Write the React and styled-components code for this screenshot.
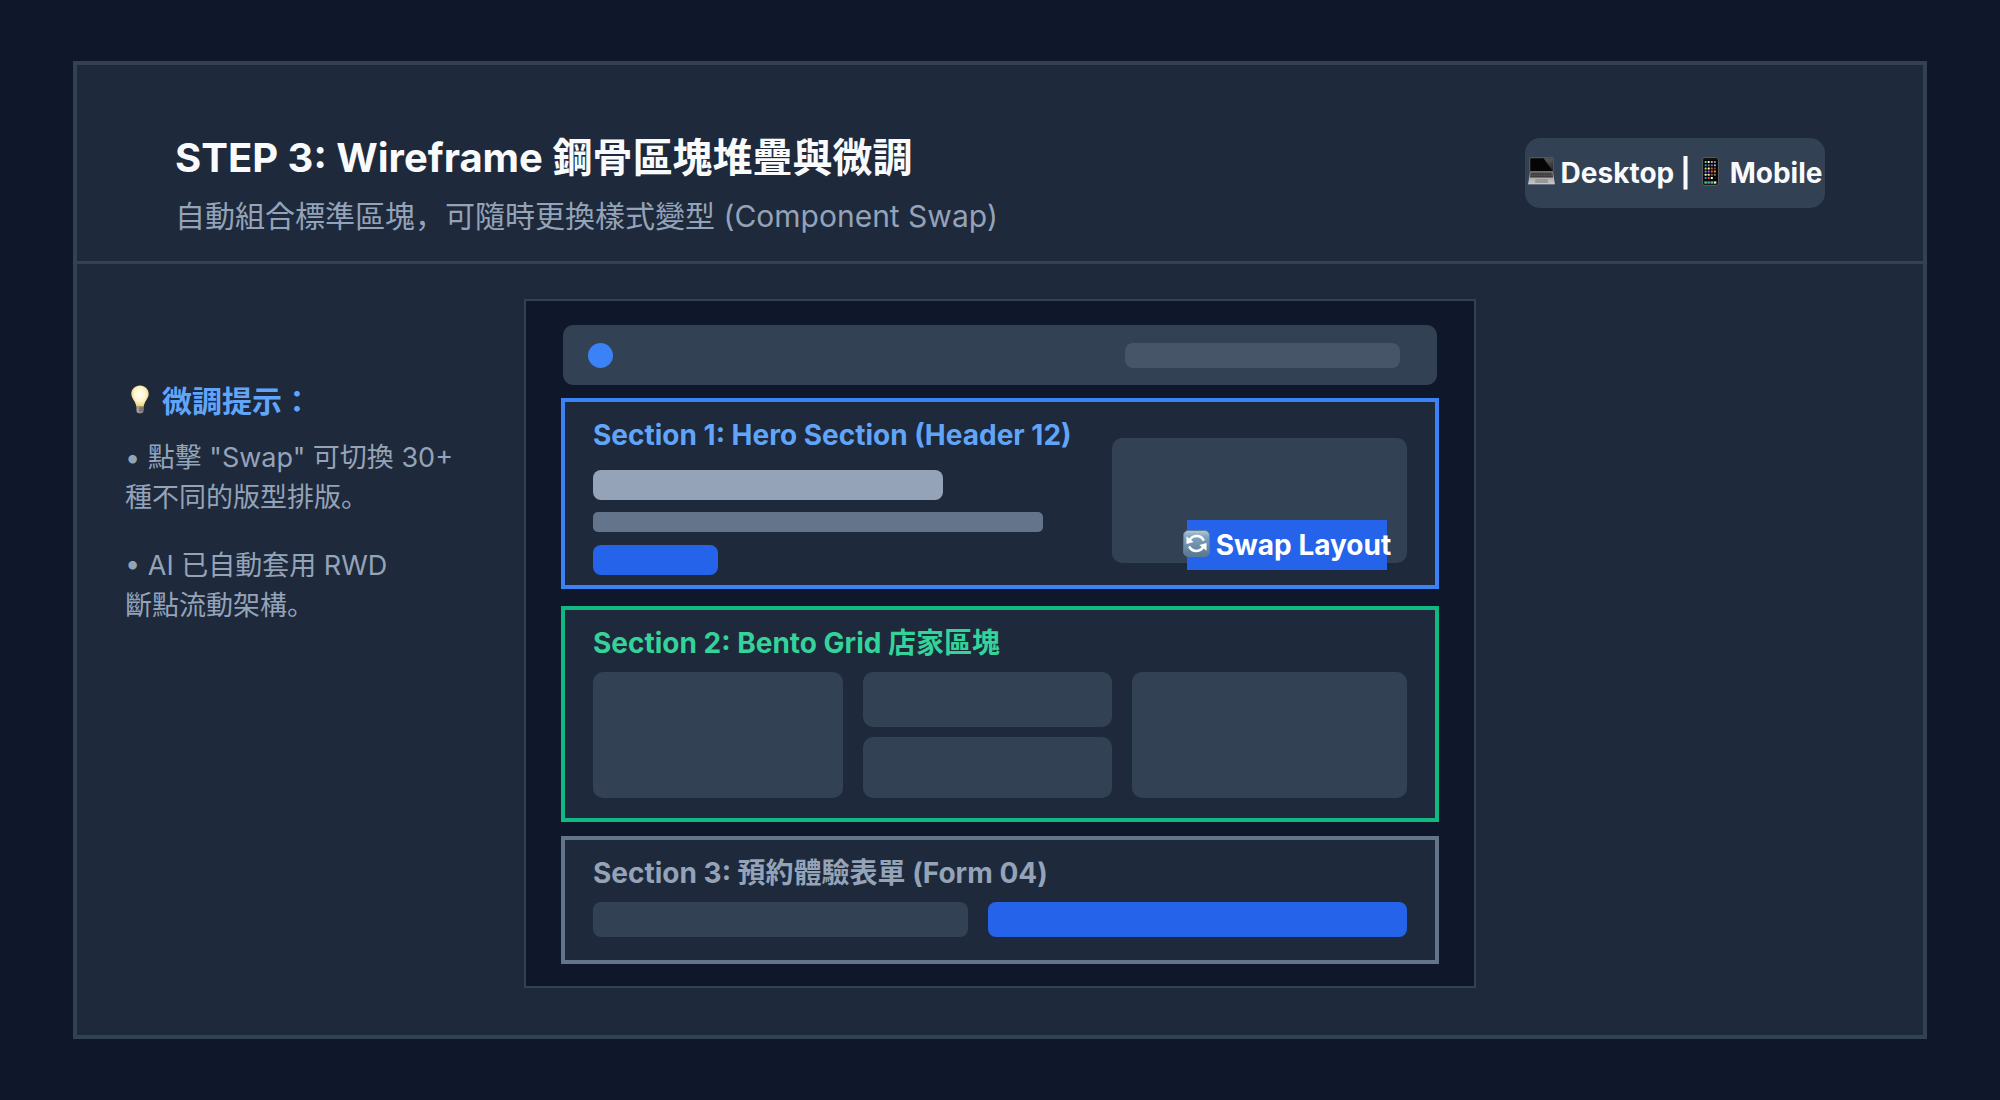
import React, { useState } from 'react';
import styled, { createGlobalStyle } from 'styled-components';

const GlobalStyle = createGlobalStyle`
  *, *::before, *::after {
    box-sizing: border-box;
  }
  body {
    margin: 0;
    background: #0f172a;
    font-family: Inter, "Noto Sans CJK JP", sans-serif;
  }
  h1, h2, h3, p {
    margin: 0;
  }
  button {
    font: inherit;
    color: inherit;
    border: none;
    background: none;
    padding: 0;
    cursor: pointer;
  }
`;

const LaptopIcon = () => (
  <Icon viewBox="0 0 27 32" $w={27} aria-hidden="true">
    <defs>
      <linearGradient id="lidShine" x1="0" y1="0" x2="0" y2="1">
        <stop offset="0" stopColor="#5a5a5a" />
        <stop offset="1" stopColor="#222" />
      </linearGradient>
      <linearGradient id="deck" x1="0" y1="0" x2="0" y2="1">
        <stop offset="0" stopColor="#8f8f8f" />
        <stop offset="1" stopColor="#c6c6c6" />
      </linearGradient>
    </defs>
    <path d="M1.6 .6h23.8v14H1.6z" fill="#777" />
    <path d="M2.2 1.2h22.6v13H2.2z" fill="#050505" />
    <path d="M15.500 1.200h9.300v13z" fill="url(#lidShine)" />
    <path d="M2 14.4h23l1.8 12.4H.2z" fill="url(#deck)" />
    <path d="M2.6 15.4h21.8l.6 5H2z" fill="#333" />
    <path d="M2.6 17h21.8M2.3 18.8h22.4" stroke="#8a8a8a" strokeWidth=".6" strokeDasharray="1.2 .5" />
    <path d="M7.4 22h12.2l.6 4H6.8z" fill="#989898" />
    <path d="M.2 26.4h26.6v.9H.2z" fill="#ddd" />
  </Icon>
);

const appColors = [
  '#4cd964', '#f2f2f2', '#c994d8', '#8a8a8a',
  '#1d9bf6', '#777777', '#a5684a', '#5ac8fa',
  '#ffcc33', '#ffffff', '#e8503a', '#555555',
  '#34aadc', '#c643fc', '#ff5e3a', '#ff9500',
  '#e8e8e8', '#ffe08a', '#666666', '#777777',
  '#2f8df5', '#ff3b30', '#ffffff', '#111111',
];
const dockColors = ['#4cd964', '#34aadc', '#4cd964', '#f2f2f2'];

const PhoneIcon = () => (
  <Icon viewBox="-5 0 27 32" $w={27} aria-hidden="true">
    <rect x=".5" y=".5" width="16" height="28" rx="2.4" fill="#111" stroke="#56585c" />
    <rect x="1.8" y="3" width="13.4" height="23.6" fill="#020202" />
    {appColors.map((c, i) => (
      <rect key={i} x={2.6 + (i % 4) * 3.1} y={4 + Math.floor(i / 4) * 3.2} width="2" height="2" rx=".5" fill={c} />
    ))}
    <rect x="1.8" y="23.8" width="13.4" height="3.4" fill="#333" />
    {dockColors.map((c, i) => (
      <rect key={i} x={2.6 + i * 3.1} y="24.4" width="2.2" height="2.2" rx=".5" fill={c} />
    ))}
  </Icon>
);

const BulbIcon = () => (
  <Icon viewBox="0 0 18 33" $w={18} aria-hidden="true">
    <defs>
      <radialGradient id="glow" cx=".5" cy=".42" r=".55">
        <stop offset="0" stopColor="#fffef6" />
        <stop offset=".55" stopColor="#fff6cf" />
        <stop offset="1" stopColor="#f1d27c" />
      </radialGradient>
    </defs>
    <path d="M9 .4C4 .4.3 4.1.3 8.8c0 3.4 2 5.5 3.4 8 .9 1.7 1.3 3.3 1.7 5h7.2c.4-1.7.8-3.3 1.7-5 1.4-2.5 3.4-4.6 3.4-8C17.7 4.1 14 .4 9 .4z" fill="url(#glow)" />
    <path d="M5.3 21.6h7.4v4.2c0 1.6-1.6 2.8-3.7 2.8s-3.7-1.2-3.7-2.8z" fill="#8d8a84" />
    <path d="M5.3 23.2h7.4M5.3 25.4h7.4" stroke="#5c5a55" strokeWidth=".8" />
    <path d="M7 22v5.4" stroke="#c9c6bf" strokeWidth="1" />
  </Icon>
);

const SwapIcon = () => (
  <Icon viewBox="0 0 28 32" $w={27} aria-hidden="true">
    <defs>
      <linearGradient id="tile" x1="0" y1="0" x2="0" y2="1">
        <stop offset="0" stopColor="#b4cadb" />
        <stop offset=".25" stopColor="#7fa2bf" />
        <stop offset="1" stopColor="#587790" />
      </linearGradient>
    </defs>
    <rect x=".5" y=".5" width="27" height="27" rx="5" fill="url(#tile)" stroke="#5f7f98" />
    <path d="M6.6 11.4A8.2 8.2 0 0 1 21.6 11M21.4 16.6A8.2 8.2 0 0 1 6.4 17" fill="none" stroke="#fff" strokeWidth="2.6" />
    <path d="M3.6 6.600v7.800l7.400-2zM24.400 21.400v-7.800l-7.400 2z" fill="#fff" />
  </Icon>
);

const App = () => {
  const [device, setDevice] = useState('desktop');

  return (
    <>
      <GlobalStyle />
      <Page>
        <Panel>
          <Header>
            <div>
              <Title>STEP 3: Wireframe 鋼骨區塊堆疊與微調</Title>
              <SubTitle>自動組合標準區塊，可隨時更換樣式變型 (Component Swap)</SubTitle>
            </div>
            <DeviceToggle role="group" aria-label="Desktop | Mobile">
              <DeviceButton
                type="button"
                aria-pressed={device === 'desktop'}
                onClick={() => setDevice('desktop')}
              >
                <LaptopIcon />
                Desktop
              </DeviceButton>
              <span>|</span>
              <DeviceButton
                type="button"
                aria-pressed={device === 'mobile'}
                onClick={() => setDevice('mobile')}
              >
                <PhoneIcon />
                Mobile
              </DeviceButton>
            </DeviceToggle>
          </Header>

          <Body>
            {/* 左側提示 */}
            <Tips>
              <TipsTitle>
                <BulbIcon />
                微調提示：
              </TipsTitle>
              <Tip>
                • 點擊 "Swap" 可切換 30+
                <br />
                種不同的版型排版。
              </Tip>
              <Tip>
                • AI 已自動套用 RWD
                <br />
                斷點流動架構。
              </Tip>
            </Tips>

            {/* 線框畫布 */}
            <Canvas>
              <NavBar>
                <NavLogo />
                <NavLinks />
              </NavBar>

              <Section $border="#3b82f6">
                <HeroRow>
                  <HeroText>
                    <SectionTitle $color="#60a5fa">Section 1: Hero Section (Header 12)</SectionTitle>
                    <HeroHeading />
                    <HeroLine />
                    <HeroCta />
                  </HeroText>
                  <HeroImage>
                    <SwapButton type="button">
                      <SwapIcon />
                      Swap Layout
                    </SwapButton>
                  </HeroImage>
                </HeroRow>
              </Section>

              <Section $border="#10b981">
                <SectionTitle $color="#34d399">Section 2: Bento Grid 店家區塊</SectionTitle>
                <BentoGrid>
                  <Block />
                  <BentoStack>
                    <Block />
                    <Block />
                  </BentoStack>
                  <Block />
                </BentoGrid>
              </Section>

              <Section $border="#64748b">
                <SectionTitle $color="#94a3b8">Section 3: 預約體驗表單 (Form 04)</SectionTitle>
                <FormRow>
                  <FormBar $color="#334155" />
                  <FormBar $color="#2563eb" />
                </FormRow>
              </Section>
            </Canvas>
          </Body>
        </Panel>
      </Page>
    </>
  );
};

const Icon = styled.svg`
  display: block;
  flex: none;
  width: ${({ $w }) => $w}px;
`;

const Page = styled.div`
  display: flex;
  min-height: 100vh;
  padding: 61px 73px;
`;

const Panel = styled.main`
  flex: 1;
  min-width: 0;
  background: #1e293b;
  border: 4px solid #334155;
`;

const Header = styled.header`
  display: flex;
  justify-content: space-between;
  align-items: flex-start;
  padding: 69px 98px 27px;
  border-bottom: 3px solid #334155;
`;

const Title = styled.h1`
  font-size: 40px;
  line-height: 48px;
  font-weight: 700;
  color: #f8fafc;
`;

const SubTitle = styled.p`
  margin-top: 16px;
  font-size: 30px;
  line-height: 36px;
  color: #94a3b8;
`;

const DeviceToggle = styled.div`
  display: flex;
  flex: none;
  align-items: center;
  justify-content: center;
  gap: 6px;
  width: 300px;
  height: 70px;
  margin-top: 4px;
  border-radius: 15px;
  background: #334155;
  color: #f8fafc;
  font-size: 28px;
  line-height: 34px;
  font-weight: 700;
  white-space: nowrap;
`;

const DeviceButton = styled.button`
  display: flex;
  align-items: center;
  gap: 6px;
`;

const Body = styled.div`
  display: grid;
  grid-template-columns: 1fr minmax(0, 952px) 1fr;
  align-items: start;
  padding: 35px 0 47px;
`;

const Tips = styled.aside`
  padding: 82px 24px 0 48px;
`;

const TipsTitle = styled.h2`
  display: flex;
  align-items: center;
  gap: 13px;
  padding-left: 6px;
  margin-bottom: 17px;
  font-size: 30px;
  line-height: 40px;
  font-weight: 700;
  color: #60a5fa;
`;

const Tip = styled.p`
  font-size: 27px;
  line-height: 40px;
  color: #94a3b8;
  white-space: nowrap;

  & + & {
    margin-top: 28px;
  }
`;

const Canvas = styled.section`
  padding: 24px 35px 22px;
  border: 2px solid #334155;
  background: #0f172a;
`;

const NavBar = styled.div`
  display: flex;
  align-items: center;
  justify-content: space-between;
  height: 60px;
  margin: 0 2px 13px;
  padding: 0 37px 0 25px;
  border-radius: 10px;
  background: #334155;
`;

const NavLogo = styled.div`
  width: 25px;
  height: 25px;
  border-radius: 50%;
  background: #3b82f6;
`;

const NavLinks = styled.div`
  width: 275px;
  height: 25px;
  border-radius: 8px;
  background: #475569;
`;

const Section = styled.section`
  padding: 16px 28px 10px;
  border: 4px solid ${({ $border }) => $border};
  background: #1e293b;

  & + & {
    margin-top: 17px;
    padding-bottom: 20px;
  }
  & + & + & {
    margin-top: 14px;
    padding-bottom: 23px;
  }
`;

const SectionTitle = styled.h3`
  font-size: 28px;
  line-height: 34px;
  font-weight: 700;
  color: ${({ $color }) => $color};
  white-space: nowrap;
`;

const HeroRow = styled.div`
  display: flex;
  justify-content: space-between;
  align-items: flex-start;
`;

const HeroText = styled.div`
  flex: 1;
`;

const HeroHeading = styled.div`
  width: 350px;
  height: 30px;
  margin-top: 18px;
  border-radius: 8px;
  background: #94a3b8;
`;

const HeroLine = styled.div`
  width: 450px;
  height: 20px;
  margin-top: 12px;
  border-radius: 5px;
  background: #64748b;
`;

const HeroCta = styled.div`
  width: 125px;
  height: 30px;
  margin-top: 13px;
  border-radius: 8px;
  background: #2563eb;
`;

const HeroImage = styled.div`
  position: relative;
  width: 295px;
  height: 125px;
  margin-top: 20px;
  border-radius: 10px;
  background: #334155;
`;

// 疊在圖片右下角的切換按鈕
const SwapButton = styled.button`
  position: absolute;
  right: 20px;
  bottom: -7px;
  display: flex;
  align-items: center;
  justify-content: center;
  gap: 6px;
  width: 200px;
  height: 50px;
  background: #2563eb;
  color: #fff;
  font-size: 28px;
  line-height: 34px;
  font-weight: 700;
  white-space: nowrap;
`;

const BentoGrid = styled.div`
  display: grid;
  grid-template-columns: 10fr 10fr 11fr;
  gap: 20px;
  height: 126px;
  margin-top: 12px;
`;

const BentoStack = styled.div`
  display: grid;
  grid-template-rows: 11fr 12fr;
  gap: 10px;
`;

const Block = styled.div`
  border-radius: 10px;
  background: #334155;
`;

const FormRow = styled.div`
  display: grid;
  grid-template-columns: 25fr 28fr;
  gap: 20px;
  margin-top: 12px;
`;

const FormBar = styled.div`
  height: 35px;
  border-radius: 8px;
  background: ${({ $color }) => $color};
`;

export default App;
